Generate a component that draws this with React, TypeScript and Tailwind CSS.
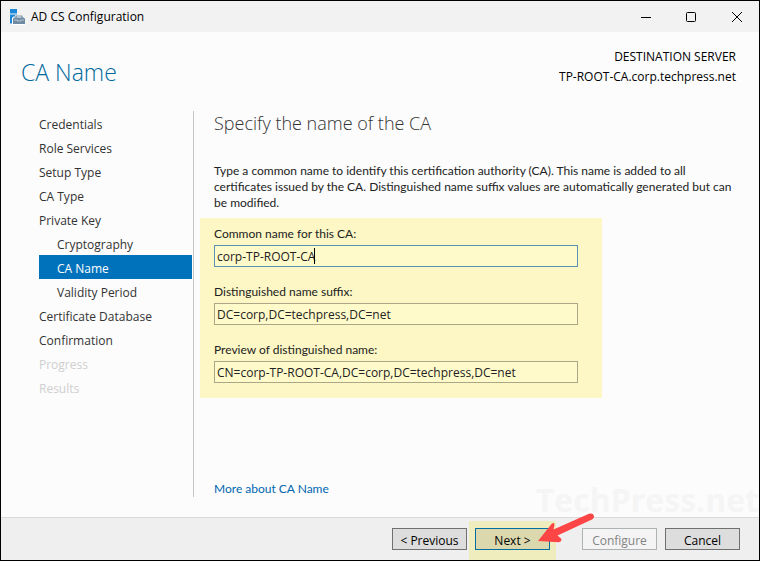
import { useState } from "react";

type Step = { label: string; nested?: boolean; disabled?: boolean };

const steps: Step[] = [
  { label: "Credentials" },
  { label: "Role Services" },
  { label: "Setup Type" },
  { label: "CA Type" },
  { label: "Private Key" },
  { label: "Cryptography", nested: true },
  { label: "CA Name", nested: true },
  { label: "Validity Period", nested: true },
  { label: "Certificate Database" },
  { label: "Confirmation" },
  { label: "Progress", disabled: true },
  { label: "Results", disabled: true },
];

const buttonBase = "h-[22px] w-[75px] border pt-0.5 text-center leading-5";
const fieldBase = "mt-[3px] block h-[22px] w-[364px] border bg-[#fffaca] px-0.5 font-['Open_Sans','Noto_Sans',sans-serif] outline-none";

function ServerIcon() {
  return (
    <svg width="16" height="16" viewBox="0 0 16 16" aria-hidden="true">
      <path d="M1 0h7v4.500H1zM1 5.500h7v9H1z" fill="#1e88d8" />
      <path d="M3 16V9L4.500 7.500H6V6h8v1.500h1l1 1.500V16z" fill="#fff" />
      <path d="M7 9V7h6V9" fill="none" stroke="#6f8ba3" strokeWidth="1.200" />
      <path d="M5 8.500h10l1 1.500V15H4v-5z" fill="#6f8ba3" />
      <path d="M5 11h3.500v1h3v-1H15" fill="none" stroke="#dfe8ef" strokeWidth="0.600" />
    </svg>
  );
}

function TitleBar() {
  return (
    <header className="flex h-[31px] items-center bg-[#f2f2f2] pl-2 text-black">
      <ServerIcon />
      <h1 className="ml-1.5 flex-1 text-[12px]">AD CS Configuration</h1>
      <button type="button" aria-label="Minimize" className="flex h-full w-[45px] items-center justify-center">
        <svg width="10" height="10" viewBox="0 0 10 10" stroke="currentColor">
          <path d="M0 5.500h10" />
        </svg>
      </button>
      <button type="button" aria-label="Maximize" className="flex h-full w-[46px] items-center justify-center">
        <svg width="10" height="10" viewBox="0 0 10 10" fill="none" stroke="currentColor">
          <rect x="0.500" y="0.500" width="9" height="9" rx="1" />
        </svg>
      </button>
      <button type="button" aria-label="Close" className="flex h-full w-[45px] items-center justify-center">
        <svg width="10" height="10" viewBox="0 0 10 10" stroke="currentColor">
          <path d="M0 0l10 10M10 0L0 10" />
        </svg>
      </button>
    </header>
  );
}

function StepList({ current }: { current: string }) {
  return (
    <nav className="w-[193px] shrink-0 border-r border-[#c6c6c6] pr-px pl-[38px]">
      <ul>
        {steps.map((step) => (
          <li key={step.label}>
            <button
              type="button"
              disabled={step.disabled}
              aria-current={step.label === current ? "step" : undefined}
              className={`block h-6 w-full pt-0.5 text-left leading-6 ${step.nested ? "pl-[18px]" : ""} ${
                step.label === current ? "bg-[#0072bc] text-white" : step.disabled ? "text-[#cfcfcf]" : "text-[#333]"
              }`}
            >
              {step.label}
            </button>
          </li>
        ))}
      </ul>
    </nav>
  );
}

export default function App() {
  const [commonName, setCommonName] = useState("corp-TP-ROOT-CA");
  const [suffix, setSuffix] = useState("DC=corp,DC=techpress,DC=net");

  return (
    <div className="flex min-h-screen flex-col border border-black bg-[#fcfcfc] font-['Open_Sans','Noto_Sans',sans-serif] text-[12px] leading-4 text-[#222]">
      <TitleBar />

      <div className="flex h-[79px] justify-between pr-[23px] pl-5">
        <h2 className="pt-6 text-[23px] leading-8 font-light text-[#00699e]">CA Name</h2>
        <div className="pt-[15px] text-right leading-5 font-medium text-black">
          <p>DESTINATION SERVER</p>
          <p>TP-ROOT-CA.corp.techpress.net</p>
        </div>
      </div>

      <div className="flex flex-1 pb-5">
        <StepList current="CA Name" />

        <main className="flex flex-1 flex-col pr-[23px] pl-1.5 font-['Lato','Open_Sans',sans-serif]">
          <div className="pl-3.5">
            <h3 className="font-['Open_Sans','Noto_Sans',sans-serif] text-[18px] leading-6 font-light text-[#333]">
              Specify the name of the CA
            </h3>
            <p className="mt-7">
              Type a common name to identify this certification authority (CA). This name is added to all
              certificates issued by the CA. Distinguished name suffix values are automatically generated but can
              be modified.
            </p>
          </div>

          <form className="mt-[7px] flex w-[402px] flex-col gap-[17px] bg-[#fcf7c5] px-3.5 pt-2 pb-[15px]">
            <div className="relative">
              <label htmlFor="common-name" className="block">Common name for this CA:</label>
              <input
                id="common-name"
                value={commonName}
                onChange={(e) => setCommonName(e.target.value)}
                className={`${fieldBase} border-[#5694b0]`}
              />
              <span className="absolute bottom-[3px] left-[100px] h-4 w-px bg-black" />
            </div>
            <div>
              <label htmlFor="suffix" className="block">Distinguished name suffix:</label>
              <input
                id="suffix"
                value={suffix}
                onChange={(e) => setSuffix(e.target.value)}
                className={`${fieldBase} border-[#aaa687]`}
              />
            </div>
            <div>
              <label htmlFor="preview" className="block">Preview of distinguished name:</label>
              <input
                id="preview"
                readOnly
                value={`CN=${commonName},${suffix}`}
                className={`${fieldBase} border-[#aaa687]`}
              />
            </div>
          </form>

          <a href="#ca-name" className="mt-auto self-start pl-3.5 text-[#0066b0]">More about CA Name</a>
        </main>
      </div>

      <footer className="relative flex h-[43px] shrink-0 justify-end border-t border-[#d9d9d9] bg-[#efefef] pr-[19px] text-black">
        <span className="absolute right-0 bottom-full text-[32px] leading-9 font-bold text-[#f5f5f5]">
          TechPress.net
        </span>
        <button type="button" className={`${buttonBase} mt-2.5 border-[#707070] bg-[#ddd]`}>&lt; Previous</button>
        <div className="relative mt-[3px] mr-[26px] ml-0.5 bg-[#efecbd] px-1.5 pt-[7px]">
          <button type="button" className={`${buttonBase} block border-[#006f9f] bg-[#dcd8ae]`}>Next &gt;</button>
          <svg className="absolute -top-2 left-[68px]" width="60" height="32" viewBox="0 0 60 32" aria-hidden="true">
            <path
              d="M1 28L14.500 11Q17.500 8.500 17.500 12L16.500 16.500L52 0.800Q56.500 -0.500 57 3.500Q57 5.500 55 6.500L20.500 22.500L24 25.500Q25.500 28.500 22 29.200Z"
              fill="#fd4545"
            />
          </svg>
        </div>
        <button type="button" disabled className={`${buttonBase} mt-2.5 border-[#adb2b5] bg-[#f4f4f4] text-[#838383]`}>
          Configure
        </button>
        <button type="button" className={`${buttonBase} mt-2.5 ml-2 border-[#707070] bg-[#ddd]`}>Cancel</button>
      </footer>
    </div>
  );
}
